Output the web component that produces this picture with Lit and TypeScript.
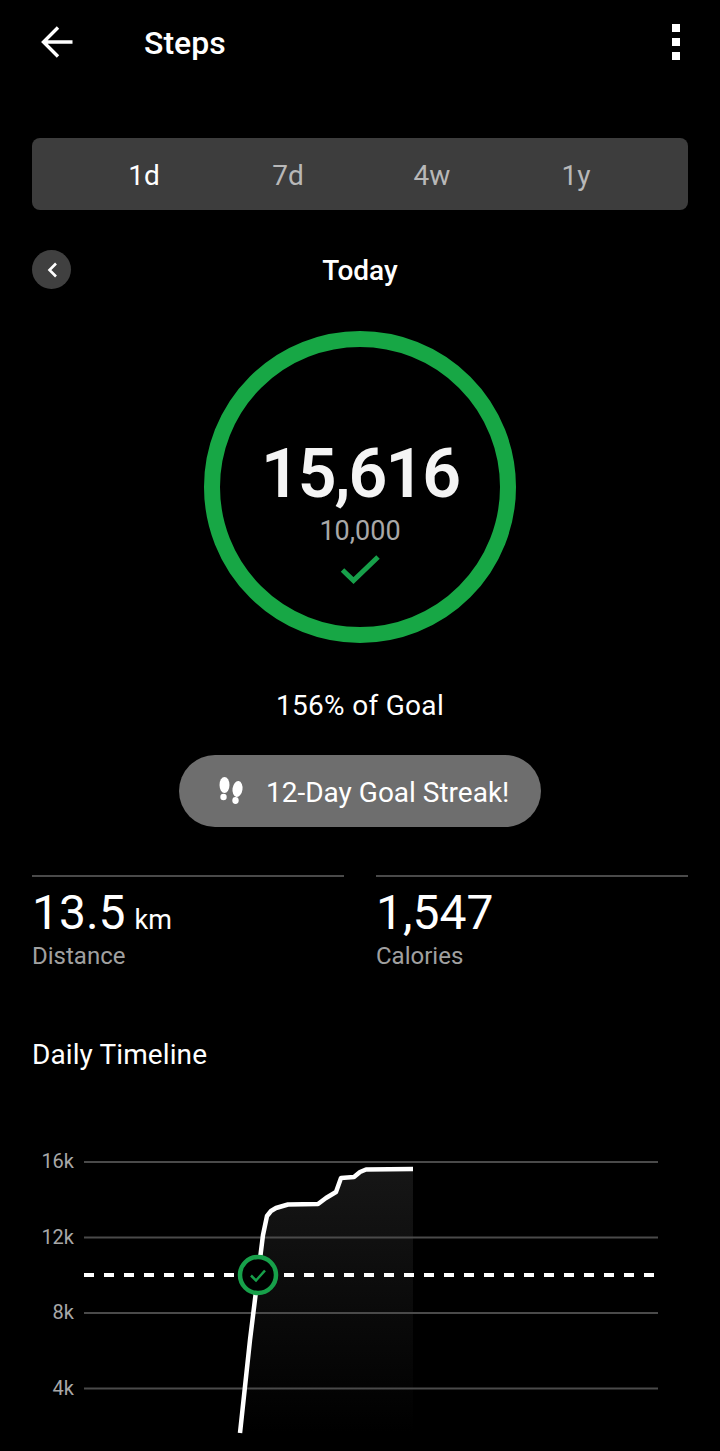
import { LitElement, html, css, svg } from "lit";
import { customElement } from "lit/decorators.js";

const LINE = "240,1433 250,1340 258,1275 263,1235 267,1216 271,1211 276,1208 288,1204.5 318,1204 326,1198 336,1192 341,1178 354,1177 360,1172 366,1169.5 413,1169";
const GRID = [
  { label: "16k", y: 1162 },
  { label: "12k", y: 1237.5 },
  { label: "8k", y: 1313 },
  { label: "4k", y: 1388.5 },
];

@customElement("app-root")
export class AppRoot extends LitElement {
  static styles = css`
    :host {
      display: block;
      width: 720px;
      height: 1451px;
      overflow: hidden;
      background: #000;
      color: #fff;
      font-family: Roboto, sans-serif;
    }
    .topbar {
      height: 84px;
      display: flex;
      align-items: center;
      padding: 0 32px 0 36px;
    }
    .topbar .back { width: 40px; height: 40px; display: block; }
    .topbar h1 {
      flex: 1;
      margin: 0 0 0 68px;
      padding-top: 2px;
      font-size: 32px;
      font-weight: 500;
    }
    .dots { display: flex; flex-direction: column; gap: 6px; margin-right: 8px; }
    .dots i { display: block; width: 8px; height: 8px; background: #fff; }
    .tabs {
      margin: 54px 32px 0;
      height: 72px;
      padding: 2px 40px 0;
      box-sizing: border-box;
      display: grid;
      grid-template-columns: repeat(4, 1fr);
      align-items: center;
      text-align: center;
      background: #3d3d3d;
      border-radius: 8px;
      font-size: 28px;
      color: #b8b8b8;
    }
    .tabs .on { color: #fff; }
    .day {
      margin: 40px 32px 0;
      height: 39px;
      display: grid;
      grid-template-columns: 39px 1fr 39px;
      align-items: center;
      text-align: center;
      font-size: 28px;
      font-weight: 500;
    }
    .day .label { padding-top: 2px; }
    .prev {
      width: 39px;
      height: 39px;
      border-radius: 50%;
      background: #404040;
      display: flex;
      align-items: center;
      justify-content: center;
    }
    .ring {
      margin: 42px auto 0;
      width: 312px;
      height: 312px;
      box-sizing: border-box;
      border: 16px solid #17a745;
      border-radius: 50%;
      display: flex;
      flex-direction: column;
      align-items: center;
      padding-top: 87px;
    }
    .steps { font-size: 68px; font-weight: 600; line-height: 80px; letter-spacing: -2px; color: #f4f4f4; }
    .goal { font-size: 27px; line-height: 32px; color: #a8a8a8; margin-top: 1px; }
    .ring svg { margin-top: 5px; display: block; }
    .pct { margin-top: 46px; text-align: center; font-size: 28px; line-height: 34px; letter-spacing: 0.3px; }
    .streak {
      margin: 32px auto 0;
      width: 362px;
      height: 72px;
      box-sizing: border-box;
      padding-left: 39px;
      display: flex;
      align-items: center;
      gap: 22px;
      background: #6e6e6e;
      border-radius: 36px;
      font-size: 28px;
    }
    .streak span { padding-top: 3px; }
    .stats {
      margin: 48px 32px 0;
      display: grid;
      grid-template-columns: 1fr 1fr;
      gap: 32px;
    }
    .stat { border-top: 2px solid #4a4a4a; padding-top: 13px; }
    .value { height: 46px; font-size: 48px; line-height: 46px; }
    .value span { font-size: 27px; margin-left: -3px; }
    .name { margin-top: 5px; font-size: 24px; line-height: 30px; color: #a0a0a0; }
    h2 {
      margin: 67px 32px 0;
      font-size: 28px;
      line-height: 34px;
      font-weight: 400;
      letter-spacing: 0.1px;
    }
    .chart { display: block; margin-top: 58px; }
    .chart text { font-family: Roboto, sans-serif; font-size: 20px; fill: #a8a8a8; }
  `;

  private chart() {
    return svg`
      <defs>
        <linearGradient id="fade" x1="0" y1="0" x2="0" y2="1">
          <stop offset="0" stop-color="#161616"/>
          <stop offset="1" stop-color="#000"/>
        </linearGradient>
      </defs>
      <polygon points="${LINE} 413,1433 240,1433" fill="url(#fade)"/>
      ${GRID.map(
        (g) => svg`
          <line x1="84" x2="658" y1=${g.y} y2=${g.y} stroke="#4a4a4a" stroke-width="2"/>
          <text x="74" y=${g.y + 6} text-anchor="end">${g.label}</text>
        `
      )}
      <polyline points=${LINE} fill="none" stroke="#fff" stroke-width="4.5" stroke-linejoin="round"/>
      <line x1="84" x2="656" y1="1275" y2="1275" stroke="#fff" stroke-width="4" stroke-dasharray="10 10"/>
      <circle cx="258" cy="1275" r="18" fill="#000" stroke="#17a04a" stroke-width="4.5"/>
      <path d="M251 1275.5l5 5 9-10" fill="none" stroke="#17a04a" stroke-width="2.5"/>
    `;
  }

  render() {
    return html`
      <div class="topbar">
        <svg class="back" viewBox="0 0 40 40">
          <path d="M36.5 20H8M22 5.5L7.5 20L22 34.5" fill="none" stroke="#fff" stroke-width="3.4"/>
        </svg>
        <h1>Steps</h1>
        <div class="dots"><i></i><i></i><i></i></div>
      </div>

      <div class="tabs">
        <div class="on">1d</div>
        <div>7d</div>
        <div>4w</div>
        <div>1y</div>
      </div>

      <div class="day">
        <div class="prev">
          <svg width="12" height="16" viewBox="0 0 12 16">
            <path d="M10 1.5L3.5 8l6.5 6.5" fill="none" stroke="#fff" stroke-width="2.6"/>
          </svg>
        </div>
        <div class="label">Today</div>
      </div>

      <div class="ring">
        <div class="steps">15,616</div>
        <div class="goal">10,000</div>
        <svg width="42" height="36" viewBox="0 0 42 36">
          <path d="M3.5 18l11 10.5L39 5" fill="none" stroke="#17a04a" stroke-width="5"/>
        </svg>
      </div>

      <div class="pct">156% of Goal</div>

      <div class="streak">
        <svg width="26" height="28" viewBox="0 0 26 28" fill="#fff">
          <ellipse cx="6.5" cy="8" rx="5" ry="8"/>
          <ellipse cx="5.5" cy="20" rx="3.2" ry="3.2"/>
          <ellipse cx="19.5" cy="12" rx="5" ry="8" transform="rotate(8 19.5 12)"/>
          <ellipse cx="17.5" cy="23.5" rx="3.2" ry="3.4"/>
        </svg>
        <span>12-Day Goal Streak!</span>
      </div>

      <div class="stats">
        <div class="stat">
          <div class="value">13.5 <span>km</span></div>
          <div class="name">Distance</div>
        </div>
        <div class="stat">
          <div class="value">1,547</div>
          <div class="name">Calories</div>
        </div>
      </div>

      <h2>Daily Timeline</h2>

      <svg class="chart" width="720" height="321" viewBox="0 1130 720 321">${this.chart()}</svg>
    `;
  }
}
